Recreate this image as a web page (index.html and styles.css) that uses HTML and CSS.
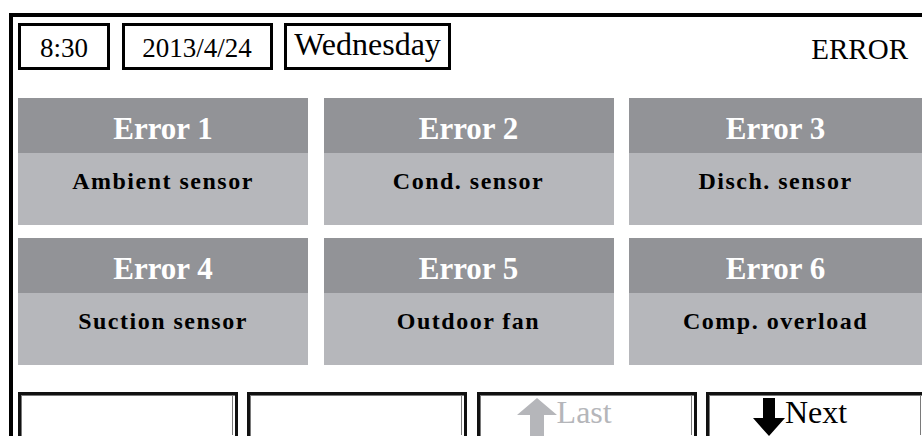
FILE: index.html
```html
<!DOCTYPE html>
<html lang="en">
<head>
    <meta charset="UTF-8">
    <meta name="viewport" content="width=device-width, initial-scale=1.0">
    <title>Error List</title>
    <link rel="stylesheet" href="styles.css">
</head>
<body>
    <div class="screen">
        <div class="topbar">
            <div class="info-box time">8:30</div>
            <div class="info-box date">2013/4/24</div>
            <div class="info-box day">Wednesday</div>
            <div class="page-title">ERROR</div>
        </div>

        <div class="error-grid">
            <div class="error-card">
                <div class="error-head">Error 1</div>
                <div class="error-body">Ambient sensor</div>
            </div>
            <div class="error-card">
                <div class="error-head">Error 2</div>
                <div class="error-body">Cond. sensor</div>
            </div>
            <div class="error-card">
                <div class="error-head">Error 3</div>
                <div class="error-body">Disch. sensor</div>
            </div>
            <div class="error-card">
                <div class="error-head">Error 4</div>
                <div class="error-body">Suction sensor</div>
            </div>
            <div class="error-card">
                <div class="error-head">Error 5</div>
                <div class="error-body">Outdoor fan</div>
            </div>
            <div class="error-card">
                <div class="error-head">Error 6</div>
                <div class="error-body">Comp. overload</div>
            </div>
        </div>

        <div class="button-row">
            <button class="nav-btn"></button>
            <button class="nav-btn"></button>
            <button class="nav-btn disabled">
                <svg class="arrow-up" width="40" height="40" viewBox="0 0 40 40">
                    <polygon points="20,0 40,17 27,17 27,40 13,40 13,17 0,17" fill="#b5b6ba"/>
                </svg>
                <span>Last</span>
            </button>
            <button class="nav-btn">
                <svg class="arrow-down" width="32" height="38" viewBox="0 0 32 38">
                    <polygon points="10,0 22,0 22,20 32,20 16,38 0,20 10,20" fill="#000"/>
                </svg>
                <span>Next</span>
            </button>
        </div>
    </div>
</body>
</html>
```

FILE: styles.css
```css
html, body{
    margin: 0;
    overflow: hidden;
    background: #fff;
}
body{
    font-family: "Liberation Serif", "Times New Roman", serif;
    color: #000;
}
/* the panel runs off the right and bottom of the window */
.screen{
    margin: 13px 0 0 9px;
    width: 904px;
    height: 413px;
    overflow: hidden;
    border-top: 4px solid #000;
    border-left: 4px solid #000;
    padding: 6px 0 0 5px;
}
.topbar{
    display: flex;
    align-items: flex-start;
    gap: 11.5px;
    width: 890px;
}
.info-box{
    box-sizing: border-box;
    height: 47px;
    border: 3px solid #000;
    text-align: center;
    font-size: 27px;
    line-height: 44px;
}
.time{
    width: 92px;
}
.date{
    width: 151px;
}
.day{
    width: 167px;
    font-size: 32px;
    line-height: 36px;
}
.page-title{
    margin-left: auto;
    padding-top: 10px;
    font-size: 29px;
    line-height: 33px;
}
.error-grid{
    display: grid;
    grid-template-columns: 290px 290px 1fr;
    column-gap: 15.5px;
    row-gap: 13px;
    margin-top: 28px;
}
.error-head{
    height: 49px;
    padding-top: 6px;
    line-height: 49px;
    background-color: #929397;
    color: #fff;
    font-size: 31px;
    font-weight: bold;
    text-align: center;
}
.error-body{
    height: 56px;
    padding-top: 16px;
    line-height: 24px;
    background-color: #b6b7bb;
    font-size: 24px;
    font-weight: bold;
    letter-spacing: 1.5px;
    text-align: center;
}
.button-row{
    display: grid;
    grid-template-columns: repeat(4, 220px);
    column-gap: 9.3px;
    margin-top: 27px;
}
.nav-btn{
    box-sizing: border-box;
    height: 47px;
    border: 3px solid #111;
    background: #fff;
    box-shadow: inset 1px 1px 0 #7a7a7a, inset -2px -1px 0 #fff, inset -3px -1px 0 #7a7a7a;
    display: flex;
    align-items: flex-start;
    padding: 2px 0 0 37px;
    font-family: inherit;
    font-size: 32px;
    line-height: 31px;
    color: #000;
}
.nav-btn svg{
    margin-top: 1px;
    flex-shrink: 0;
}
.nav-btn.disabled{
    color: #b5b6ba;
}
.arrow-down{
    margin-left: 7px;
}
```
